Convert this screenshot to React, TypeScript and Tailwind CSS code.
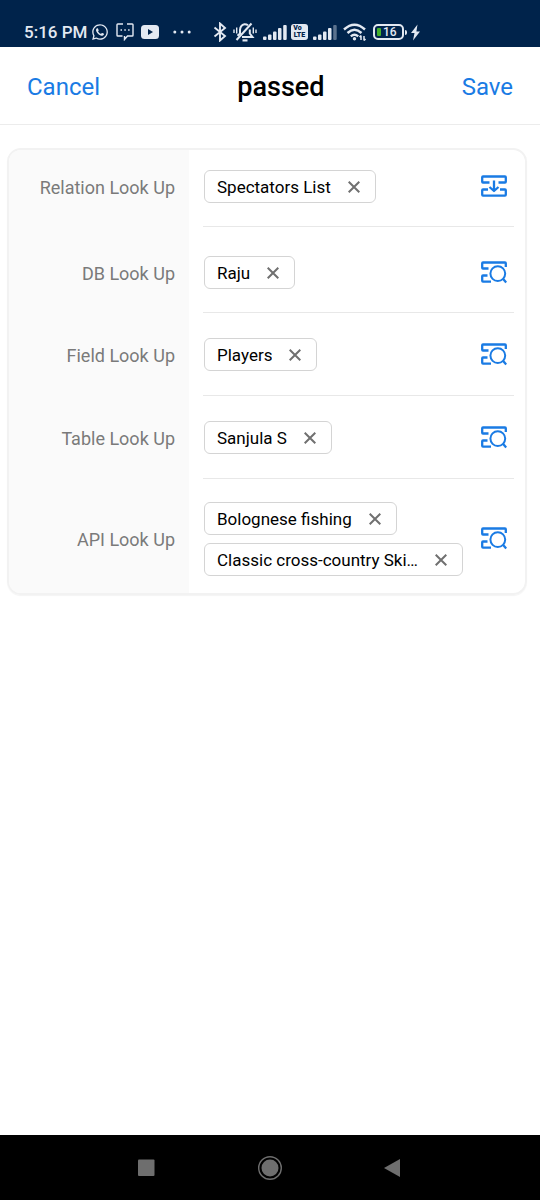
import React from "react";
import clsx from "clsx";
import { FaWhatsapp } from "react-icons/fa";

type LookUpKind = "relation" | "search";

interface ILookUpField {
  label: string;
  kind: LookUpKind;
  values: string[];
  rowClass: string;
}

const fields: ILookUpField[] = [
  {
    label: "Relation Look Up",
    kind: "relation",
    values: ["Spectators List"],
    rowClass: "pt-5 pb-[23px]",
  },
  {
    label: "DB Look Up",
    kind: "search",
    values: ["Raju"],
    rowClass: "pt-[29px] pb-[23px]",
  },
  {
    label: "Field Look Up",
    kind: "search",
    values: ["Players"],
    rowClass: "pt-[25px] pb-6",
  },
  {
    label: "Table Look Up",
    kind: "search",
    values: ["Sanjula S"],
    rowClass: "pt-[25px] pb-6",
  },
  {
    label: "API Look Up",
    kind: "search",
    values: ["Bolognese fishing", "Classic cross-country Ski…"],
    rowClass: "pt-[23px] pb-[17px]",
  },
];

function SignalIcon({ weak = false }: { weak?: boolean }) {
  return (
    <svg className="h-4 w-6" viewBox="0 0 24 16" fill="currentColor">
      <rect x="0" y="12.5" width="3.5" height="3.5" rx="1" />
      <rect x="5" y="10.5" width="3.5" height="5.5" rx="1" />
      <rect x="10" y="7.5" width="3.5" height="8.5" rx="1" />
      <rect x="15" y="4" width="3.5" height="12" rx="1" />
      <rect
        x="20.2"
        y="1"
        width="3.5"
        height="15"
        rx="1"
        opacity={weak ? 0.4 : 1}
      />
    </svg>
  );
}

function StatusBar() {
  return (
    <div className="flex h-[47px] items-center bg-[#00234b] pt-[17px] pl-6 text-[#e3e9f2]">
      <span className="w-[67px] text-[17px] leading-5 font-medium whitespace-nowrap">
        5:16 PM
      </span>
      <FaWhatsapp className="size-[18px]" />
      {/* message */}
      <svg
        className="ml-[7px] h-[18px] w-[18px]"
        viewBox="0 0 18 18"
        fill="none"
        stroke="currentColor"
        strokeWidth="1.4"
      >
        <path d="M7 1H1.8Q1 1 1 1.8V12.2Q1 13 1.8 13H6.5M11 1H16.2Q17 1 17 1.8V12.2Q17 13 16.2 13H11.5L8.5 16.5V13" />
        <path d="M4.5 7H6M8.3 7H9.8M12.1 7H13.6" strokeWidth="1.6" />
      </svg>
      {/* video */}
      <svg className="ml-[7px] h-[14px] w-[18px]" viewBox="0 0 18 14">
        <rect width="18" height="14" rx="3.5" fill="currentColor" />
        <path d="M7 4l5 3-5 3z" fill="#00234b" />
      </svg>
      <svg
        className="ml-[14px] h-1 w-[18px]"
        viewBox="0 0 18 4"
        fill="currentColor"
      >
        <circle cx="1.8" cy="2" r="1.5" />
        <circle cx="9" cy="2" r="1.5" />
        <circle cx="16.2" cy="2" r="1.5" />
      </svg>
      {/* bluetooth */}
      <svg
        className="ml-[22px] h-5 w-[14px]"
        viewBox="0 0 14 20"
        fill="none"
        stroke="currentColor"
        strokeWidth="1.9"
      >
        <path d="M1.5 5.5L12 14L7 18.5V1.5L12 6L1.5 14.5" />
      </svg>
      {/* muted bell */}
      <svg
        className="ml-[6px] h-5 w-6"
        viewBox="0 0 24 20"
        fill="none"
        stroke="currentColor"
        strokeWidth="2"
      >
        <path d="M4.5 13.8L7 11.5V8Q7.3 3.2 11.5 2.3Q13.5 2.2 15 3.3M16.8 7.5V11.5L19.5 15H9" />
        <path d="M3.5 18L18.5 1.5" strokeWidth="2" />
        <path d="M9.5 18.4H14.5" strokeWidth="2.2" />
        <path
          d="M1 7.5V11M3.7 5.5V11.5M20.3 5.5V11.5M23 7.5V11"
          strokeWidth="1.4"
        />
      </svg>
      <span className="ml-[6px] flex">
        <SignalIcon />
      </span>
      <span className="ml-1 flex h-4 w-[17px] flex-col items-center justify-center rounded-[3px] bg-[#e3e9f2] text-[7px] leading-[7px] font-black text-[#00234b]">
        <span className="pr-1">Vo</span>
        <span>LTE</span>
      </span>
      <span className="ml-[5px] flex">
        <SignalIcon weak />
      </span>
      {/* wifi */}
      <svg
        className="ml-[6px] h-[18px] w-6"
        viewBox="0 0 24 18"
        fill="none"
        stroke="currentColor"
        strokeWidth="2.4"
      >
        <path d="M1 6.5Q11.5 -3 22 6.5M4.5 10Q11.5 3.5 18.5 10M7.8 13.3Q11.5 10 15.2 13.3" />
        <circle cx="11.5" cy="15.7" r="1.7" fill="currentColor" stroke="none" />
        <path
          d="M18 17V12.5M16.5 14L18 12.5M21 13V17.5M22.5 16L21 17.5"
          strokeWidth="1.5"
        />
      </svg>
      {/* battery */}
      <span className="ml-[6px] flex h-4 w-[31px] items-center rounded-[5px] border-2 border-[#e3e9f2] pl-[2px]">
        <span className="h-2 w-1 rounded-[1px] bg-[#43b02a]" />
        <span className="ml-[2px] text-[12px] leading-3 font-medium">16</span>
      </span>
      <span className="ml-px h-[5px] w-[2px] rounded-r-xs bg-[#e3e9f2]" />
      <svg
        className="ml-1 h-[17px] w-[9px]"
        viewBox="0 0 9 17"
        fill="currentColor"
      >
        <path d="M6.5 0.5L0 9H3.5L2 16.5L9 7.5H5.4Z" />
      </svg>
    </div>
  );
}

function LookUpIcon({ kind }: { kind: LookUpKind }) {
  return (
    <svg
      className="h-6 w-[26px]"
      viewBox="0 0 26 24"
      fill="none"
      stroke="currentColor"
      strokeWidth="2.3"
      strokeLinejoin="round"
    >
      {kind === "relation" ? (
        <>
          <path d="M8.5 7.5H2Q1.2 7.5 1.2 6.7V2.3Q1.2 1.5 2 1.5H24Q24.8 1.5 24.8 2.3V6.7Q24.8 7.5 24 7.5H17.5" />
          <path d="M7 14.5H2Q1.2 14.5 1.2 15.3V19.8Q1.2 20.6 2 20.6H24Q24.8 20.6 24.8 19.8V15.3Q24.8 14.5 24 14.5H19" />
          <path d="M13 5.5V16M8.5 12L13 16L17.5 12" />
        </>
      ) : (
        <>
          <path d="M7.500 7.5H2Q1.2 7.5 1.2 6.7V2.3Q1.2 1.5 2 1.5H24Q24.8 1.5 24.8 2.3V6" />
          <path d="M6.5 14.5H2Q1.2 14.5 1.2 15.3V19.8Q1.2 20.6 2 20.6H10" />
          <circle cx="16.8" cy="12.6" r="7.4" strokeWidth="2" />
          <path d="M22 17.800L25.2 21.500" />
        </>
      )}
    </svg>
  );
}

function Chip({ text }: { text: string }) {
  return (
    <span className="flex h-[33px] max-w-full items-center rounded-md border border-[#d4d4d4] pr-[15px] pl-3 text-black">
      <span className="truncate text-[17px] leading-6">{text}</span>
      <button
        type="button"
        aria-label={`Remove ${text}`}
        className="ml-[17px] shrink-0 cursor-pointer text-[#707070]"
      >
        <svg
          className="size-3"
          viewBox="0 0 12 12"
          fill="none"
          stroke="currentColor"
          strokeWidth="2"
        >
          <path d="M0.7 0.7L11.3 11.3M11.3 0.7L0.7 11.3" />
        </svg>
      </button>
    </span>
  );
}

export default function App() {
  return (
    <div className="flex min-h-screen flex-col bg-white font-['Roboto',sans-serif]">
      <StatusBar />
      <header className="flex items-center justify-between border-b border-[#ececec] px-[27px] pt-[22px] pb-[19px]">
        <button
          type="button"
          className="cursor-pointer text-2xl leading-9 text-[#1a7be4]"
        >
          Cancel
        </button>
        <h1 className="text-[27px] leading-9 font-medium text-black">passed</h1>
        <button
          type="button"
          className="cursor-pointer text-2xl leading-9 text-[#1a7be4]"
        >
          Save
        </button>
      </header>

      <main className="flex-1 pt-[23px] pr-[13px] pl-[7px]">
        <div className="overflow-hidden rounded-[14px] border-2 border-[#f2f2f2] shadow-[0_1px_1px_#f4f4f4]">
          {fields.map((field, i) => (
            <div key={field.label} className="flex">
              <div
                className={clsx(
                  "flex w-[180px] shrink-0 items-center justify-end bg-[#fafafa] pr-[14px]",
                  field.rowClass
                )}
              >
                <span className="pt-[2px] text-lg leading-6 text-[#7a7a7a]">
                  {field.label}
                </span>
              </div>
              <div
                className={clsx(
                  "mr-[11px] ml-[14px] flex min-w-0 flex-1 items-center justify-between",
                  i < fields.length - 1 && "border-b border-[#e8e8e8]",
                  field.rowClass
                )}
              >
                <div className="flex min-w-0 flex-col items-start gap-2 pl-px">
                  {field.values.map((value) => (
                    <Chip key={value} text={value} />
                  ))}
                </div>
                <button
                  type="button"
                  aria-label={field.label}
                  className="mr-[7px] shrink-0 cursor-pointer text-[#1a7be4]"
                >
                  <LookUpIcon kind={field.kind} />
                </button>
              </div>
            </div>
          ))}
        </div>
      </main>

      <nav className="flex h-[65px] items-center justify-around bg-black px-[84px] text-[#6e6e6e]">
        <button type="button" aria-label="Recent apps" className="cursor-pointer">
          <svg className="size-6" viewBox="0 0 24 24" fill="currentColor">
            <rect x="4" y="3.5" width="16.5" height="16.5" rx="1" />
          </svg>
        </button>
        <button type="button" aria-label="Home" className="cursor-pointer">
          <svg className="size-6" viewBox="0 0 24 24">
            <circle
              cx="12"
              cy="12"
              r="11.3"
              fill="none"
              stroke="currentColor"
              strokeWidth="1.4"
            />
            <circle cx="12" cy="12" r="8.5" fill="currentColor" />
          </svg>
        </button>
        <button type="button" aria-label="Back" className="cursor-pointer">
          <svg className="size-6" viewBox="0 0 24 24" fill="currentColor">
            <path d="M18 3V21L2 12Z" />
          </svg>
        </button>
      </nav>
    </div>
  );
}
